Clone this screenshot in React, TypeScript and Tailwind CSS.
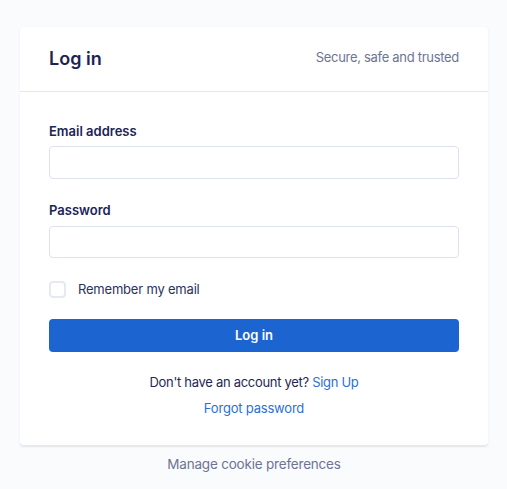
import React, { useState } from 'react'

export default function App() {
  const [remember, setRemember] = useState(false)

  return (
    <div
      className="min-h-[489px] bg-[#fafbfd] pt-[27px] px-[20px] text-[#1f2853]"
      style={{ fontFamily: 'Inter, "Noto Sans", sans-serif' }}
    >
      <div className="w-[468px] bg-white rounded-[4px] shadow-[0_1px_2px_rgba(30,40,90,0.10)] border-b border-[#e6e8f0]">
        {/* Header */}
        <div className="h-[65px] px-[29px] pb-[2px] flex items-center justify-between border-b border-[#e4e6ee]">
          <h1 className="text-[18px] font-semibold text-[#1c2456]">Log in</h1>
          <span className="text-[13px] tracking-[-0.3px] text-[#6d7493]">Secure, safe and trusted</span>
        </div>

        {/* Body */}
        <div className="px-[29px] pt-[29px] pb-[27px]">
          <label className="block text-[13px] leading-[20px] font-semibold text-[#1c2456]">
            Email address
          </label>
          <input
            type="email"
            className="mt-[5px] block w-full h-[33px] rounded-[4px] border border-[#dfe2ec] px-3 text-[13px] outline-none"
          />

          <label className="block mt-[21px] text-[13px] leading-[20px] font-semibold text-[#1c2456]">
            Password
          </label>
          <input
            type="password"
            className="mt-[6px] block w-full h-[32px] rounded-[4px] border border-[#dfe2ec] px-3 text-[13px] outline-none"
          />

          <label className="mt-[21px] flex items-center gap-[12px] cursor-pointer">
            <button
              type="button"
              onClick={() => setRemember(!remember)}
              className={`w-[17px] h-[17px] rounded-[4px] border-2 ${remember ? 'bg-[#1c64d0] border-[#1c64d0]' : 'bg-white border-[#e6e9f1]'}`}
            />
            <span className="text-[13px] leading-[20px] tracking-[-0.2px] text-[#2a3260]">Remember my email</span>
          </label>

          <button
            type="button"
            className="mt-[20px] w-full h-[33px] rounded-[4px] bg-[#1c64d0] text-white text-[13px] font-semibold"
          >
            Log in
          </button>

          <p className="mt-[20px] text-center text-[13px] leading-[20px] tracking-[-0.3px] text-[#1f2853]">
            Don't have an account yet? <a className="text-[#2a6fd6]">Sign Up</a>
          </p>
          <p className="mt-[6px] text-center text-[13px] leading-[20px] tracking-[-0.2px]">
            <a className="text-[#2a6fd6]">Forgot password</a>
          </p>
        </div>
      </div>

      <p className="w-[468px] mt-[8px] text-center text-[13.5px] leading-[20px] tracking-[-0.2px] text-[#6d7493]">
        Manage cookie preferences
      </p>
    </div>
  )
}
